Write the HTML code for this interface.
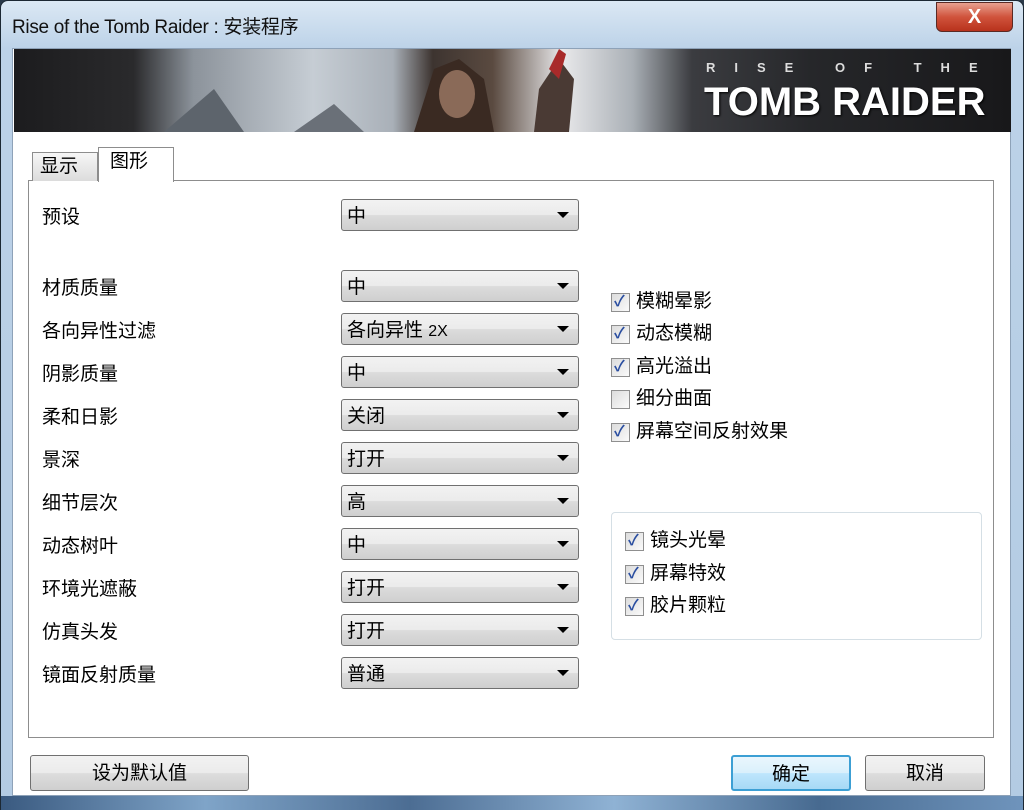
<!DOCTYPE html>
<html><head><meta charset="utf-8"><style>
*{margin:0;padding:0;box-sizing:border-box}
body{width:1024px;height:810px;overflow:hidden;background:#2a3a4a;font-family:"Liberation Sans","Noto Sans CJK SC",sans-serif;position:relative}
.frame{position:absolute;left:0;top:0;width:1024px;height:810px;border:1px solid #1c2833;border-radius:8px 8px 0 0;background:linear-gradient(#dbe8f4,#bcd2e8 48px,#b3cbe3);}
.bottomfr{position:absolute;left:1px;top:796px;width:1022px;height:14px;background:linear-gradient(90deg,#3a5a80,#7fa4c8 20%,#4c6d93 40%,#8fb2d4 60%,#476a90 80%,#6f94bc);}
.title{position:absolute;left:12px;top:12px;font-size:19px;color:#111;letter-spacing:-0.3px}
.close{position:absolute;left:936px;top:2px;width:77px;height:30px;border:1px solid #5a2a24;border-radius:0 0 6px 6px;background:linear-gradient(#e8a190,#d0533c 50%,#b8321c);color:#fff;font-size:20px;font-weight:bold;text-align:center;line-height:29px}
.client{position:absolute;left:12px;top:48px;width:999px;height:748px;background:#fff;border:1px solid #8ea2b8}
.banner{position:absolute;left:14px;top:49px;width:997px;height:83px;overflow:hidden;background:linear-gradient(90deg,#1c1c1e 0,#2a2a2c 12%,#8c939b 18%,#c6cdd4 30%,#a9b0b8 38%,#3d3430 42%,#5a4a40 48%,#e8e8ea 55%,#aab0b6 62%,#3b3c40 68%,#26272a 80%,#18181a 100%)}
.tab{position:absolute;font-size:19px;color:#000;border:1px solid #8d8d8d;border-bottom:none}
.panel{position:absolute;left:28px;top:180px;width:966px;height:558px;border:1px solid #8d8d8d;background:#fff}
.lbl{position:absolute;left:42px;font-size:19px;color:#000}
.dd{position:absolute;left:341px;width:238px;height:32px;border:1px solid #707070;border-radius:3px;background:linear-gradient(#f2f2f2,#ebebeb 50%,#dcdcdc 51%,#cfcfcf);font-size:19px;line-height:30px;padding-left:5px;padding-top:2px;color:#000}
.dd:after{content:"";position:absolute;right:9px;top:12px;border-left:6px solid transparent;border-right:6px solid transparent;border-top:6px solid #000}
.cb{position:absolute;font-size:19px;color:#000;padding-left:25px;line-height:20px}
.cb:before{content:"";position:absolute;left:0;top:1px;width:17px;height:17px;border:1px solid #8f8f8f;background:linear-gradient(135deg,#dcdcdc,#fafafa)}
.cb.on:after{content:"✓";position:absolute;left:3px;top:0;font-size:15px;color:#2a4ea0;font-weight:bold}
.grp{position:absolute;left:611px;top:512px;width:371px;height:128px;border:1px solid #d5dfe5;border-radius:4px}
.btn{position:absolute;top:755px;height:36px;border:1px solid #707070;border-radius:3px;background:linear-gradient(#f2f2f2,#ebebeb 50%,#dddddd 51%,#cfcfcf);font-size:19px;text-align:center;line-height:36px;color:#000}
</style></head><body>
<div class="frame"></div>
<div class="title">Rise of the Tomb Raider : 安装程序</div>
<div class="close">X</div>
<div class="client"></div>
<div class="banner">
<svg width="997" height="83" style="position:absolute;left:0;top:0">
<polygon points="400,83 420,20 445,10 470,30 480,83" fill="#3a2a22"/>
<ellipse cx="443" cy="45" rx="18" ry="24" fill="#8a6a58"/>
<polygon points="520,83 525,40 545,10 560,30 555,83" fill="#4a3a34"/>
<polygon points="535,20 545,0 552,5 545,30" fill="#a82a2a"/>
<polygon points="150,83 200,40 230,83" fill="#5d646c"/>
<polygon points="280,83 320,55 350,83" fill="#6a7078"/>
</svg>
<div style="position:absolute;left:692px;top:11px;color:#ddd;font-size:13px;font-weight:bold;letter-spacing:19px;white-space:nowrap">RISE OF THE</div>
<div style="position:absolute;left:690px;top:31px;color:#fff;font-size:40px;font-weight:bold;letter-spacing:0px;white-space:nowrap;text-shadow:1px 1px 2px #000">TOMB RAIDER</div>
</div>
<div class="panel"></div>
<div class="tab" style="left:32px;top:152px;width:66px;height:29px;background:linear-gradient(#f6f6f6,#dcdcdc);padding-left:7px;line-height:28px">显示</div>
<div class="tab" style="left:98px;top:147px;width:76px;height:35px;background:#fff;padding-left:11px;line-height:28px">图形</div>

<div class="lbl" style="top:202px">预设</div><div class="dd" style="top:199px">中</div>
<div class="lbl" style="top:273px">材质质量</div><div class="dd" style="top:270px">中</div>
<div class="lbl" style="top:316px">各向异性过滤</div><div class="dd" style="top:313px">各向异性 <span style="font-size:16px">2X</span></div>
<div class="lbl" style="top:359px">阴影质量</div><div class="dd" style="top:356px">中</div>
<div class="lbl" style="top:402px">柔和日影</div><div class="dd" style="top:399px">关闭</div>
<div class="lbl" style="top:445px">景深</div><div class="dd" style="top:442px">打开</div>
<div class="lbl" style="top:488px">细节层次</div><div class="dd" style="top:485px">高</div>
<div class="lbl" style="top:531px">动态树叶</div><div class="dd" style="top:528px">中</div>
<div class="lbl" style="top:574px">环境光遮蔽</div><div class="dd" style="top:571px">打开</div>
<div class="lbl" style="top:617px">仿真头发</div><div class="dd" style="top:614px">打开</div>
<div class="lbl" style="top:660px">镜面反射质量</div><div class="dd" style="top:657px">普通</div>

<div class="cb on" style="left:611px;top:292px">模糊晕影</div>
<div class="cb on" style="left:611px;top:324px">动态模糊</div>
<div class="cb on" style="left:611px;top:357px">高光溢出</div>
<div class="cb" style="left:611px;top:389px">细分曲面</div>
<div class="cb on" style="left:611px;top:422px">屏幕空间反射效果</div>
<div class="grp"></div>
<div class="cb on" style="left:625px;top:531px">镜头光晕</div>
<div class="cb on" style="left:625px;top:564px">屏幕特效</div>
<div class="cb on" style="left:625px;top:596px">胶片颗粒</div>

<div class="btn" style="left:30px;width:219px">设为默认值</div>
<div class="btn" style="left:731px;width:120px;border:2px solid #3c9fd4;background:linear-gradient(#eaf6fd,#d9f0fc 50%,#bee6fd 51%,#a7d9f5)">确定</div>
<div class="btn" style="left:865px;width:120px">取消</div>
<div class="bottomfr"></div>
</body></html>
